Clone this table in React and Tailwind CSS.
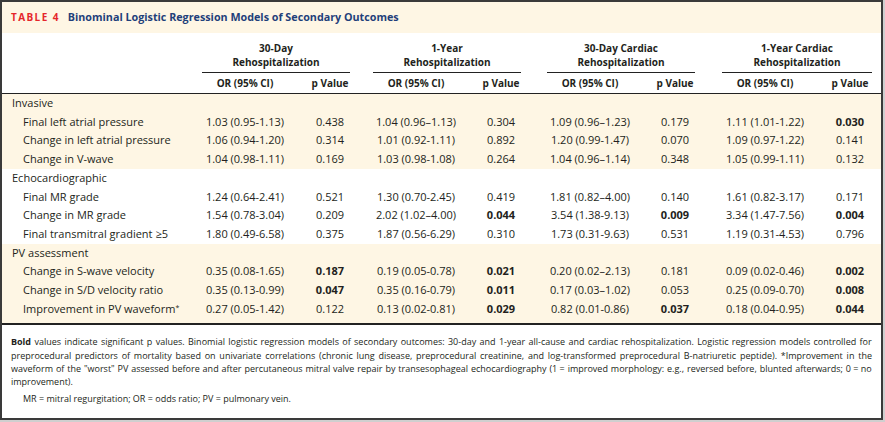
import React from "react";

const rows = [
  {
    section: "Invasive",
    bg: "bg-[#fef6e4]",
    items: [
      ["Final left atrial pressure", [["1.03 (0.95-1.13)", "0.438"], ["1.04 (0.96\u20131.13)", "0.304"], ["1.09 (0.96\u20131.23)", "0.179"], ["1.11 (1.01-1.22)", "0.030", true]]],
      ["Change in left atrial pressure", [["1.06 (0.94-1.20)", "0.314"], ["1.01 (0.92-1.11)", "0.892"], ["1.20 (0.99-1.47)", "0.070"], ["1.09 (0.97-1.22)", "0.141"]]],
      ["Change in V-wave", [["1.04 (0.98-1.11)", "0.169"], ["1.03 (0.98-1.08)", "0.264"], ["1.04 (0.96\u20131.14)", "0.348"], ["1.05 (0.99-1.11)", "0.132"]]],
    ],
  },
  {
    section: "Echocardiographic",
    bg: "bg-white",
    items: [
      ["Final MR grade", [["1.24 (0.64-2.41)", "0.521"], ["1.30 (0.70-2.45)", "0.419"], ["1.81 (0.82\u20134.00)", "0.140"], ["1.61 (0.82-3.17)", "0.171"]]],
      ["Change in MR grade", [["1.54 (0.78-3.04)", "0.209"], ["2.02 (1.02\u20134.00)", "0.044", true], ["3.54 (1.38-9.13)", "0.009", true], ["3.34 (1.47-7.56)", "0.004", true]]],
      ["Final transmitral gradient \u22655", [["1.80 (0.49-6.58)", "0.375"], ["1.87 (0.56-6.29)", "0.310"], ["1.73 (0.31-9.63)", "0.531"], ["1.19 (0.31-4.53)", "0.796"]]],
    ],
  },
  {
    section: "PV assessment",
    bg: "bg-[#fef6e4]",
    items: [
      ["Change in S-wave velocity", [["0.35 (0.08-1.65)", "0.187", true], ["0.19 (0.05-0.78)", "0.021", true], ["0.20 (0.02\u20132.13)", "0.181"], ["0.09 (0.02-0.46)", "0.002", true]]],
      ["Change in S/D velocity ratio", [["0.35 (0.13-0.99)", "0.047", true], ["0.35 (0.16-0.79)", "0.011", true], ["0.17 (0.03\u20131.02)", "0.053"], ["0.25 (0.09-0.70)", "0.008", true]]],
      ["Improvement in PV waveform*", [["0.27 (0.05-1.42)", "0.122"], ["0.13 (0.02-0.81)", "0.029", true], ["0.82 (0.01-0.86)", "0.037", true], ["0.18 (0.04-0.95)", "0.044", true]]],
    ],
  },
];

const groups = [
  { ml: "ml-0", w: "w-[148px]", l1: "30-Day", l2: "Rehospitalization" },
  { ml: "ml-[23px]", w: "w-[148px]", l1: "1-Year", l2: "Rehospitalization" },
  { ml: "ml-[26px]", w: "w-[148px]", l1: "30-Day Cardiac", l2: "Rehospitalization" },
  { ml: "ml-[27px]", w: "w-[150px]", l1: "1-Year Cardiac", l2: "Rehospitalization" },
];

const footLines = [
  "values indicate significant p values. Binomial logistic regression models of secondary outcomes: 30-day and 1-year all-cause and cardiac rehospitalization. Logistic regression models controlled for",
  "preprocedural predictors of mortality based on univariate correlations (chronic lung disease, preprocedural creatinine, and log-transformed preprocedural B-natriuretic peptide). *Improvement in the",
  "waveform of the \"worst\" PV assessed before and after percutaneous mitral valve repair by transesophageal echocardiography (1\u00a0= improved morphology: e.g., reversed before, blunted afterwards; 0\u00a0=\u00a0no",
];

function Label({ text }) {
  if (text.endsWith("*")) {
    return (
      <span>
        {text.slice(0, -1)}
        <span className="relative top-[-3px] text-[7px]">*</span>
      </span>
    );
  }
  return <span>{text}</span>;
}

function JustLine({ text, boldFirst }) {
  const words = text.split(" ");
  return (
    <div className="flex justify-between whitespace-nowrap">
      {boldFirst && <b className="shrink-0">Bold</b>}
      {words.map((w, i) => (
        <span key={i} className="shrink-0">{w}</span>
      ))}
    </div>
  );
}

export default function App() {
  return (
    <div className="w-[885px] h-[422px] bg-[#cfcfcf] font-['Open_Sans',sans-serif]">
      <div className="w-[883px] h-[420px] border-2 border-[#3a3a3a] bg-white flex flex-col text-[#231f20] overflow-hidden">
        {/* Title band */}
        <div className="h-[31px] bg-[#fef6e4] flex items-center pl-[9px] shrink-0">
          <span className="text-[#e5252b] font-bold text-[10px] tracking-[1.4px] mr-[8px]">TABLE 4</span>
          <span className="text-[#1f3f7a] font-bold text-[10.75px]">Binominal Logistic Regression Models of Secondary Outcomes</span>
        </div>
        {/* Header */}
        <div className="h-[61px] flex shrink-0 border-b-[1.5px] border-[#222]">
          <div className="w-[200px] shrink-0" />
          {groups.map((g, i) => (
            <div key={i} className={`${g.ml} ${g.w} shrink-0 flex flex-col`}>
              <div className="h-[40px] flex flex-col items-center justify-end pb-[3px] font-bold text-[10px] leading-[14px] border-b-[1.5px] border-[#222]">
                <span>{g.l1}</span>
                <span>{g.l2}</span>
              </div>
              <div className="flex-1 flex items-center font-bold text-[10px]">
                <div className="w-[86px] text-center">OR (95% CI)</div>
                <div className="w-[22px]" />
                <div className="w-[40px] text-center">p Value</div>
              </div>
            </div>
          ))}
        </div>
        {/* Body */}
        {rows.map((sec, si) => (
          <div key={si} className={`${sec.bg} shrink-0 ${si === 2 ? "pb-[5px] border-b-2 border-[#222]" : ""}`}>
            <div className="h-[18.7px] flex items-center pl-[10px] text-[11px]">{sec.section}</div>
            {sec.items.map(([label, vals], ri) => (
              <div key={ri} className="h-[18.7px] flex items-center text-[11px]">
                <div className="w-[200px] pl-[21px] shrink-0 whitespace-nowrap">
                  <Label text={label} />
                </div>
                {vals.map(([or, p, bold], gi) => (
                  <div key={gi} className={`${groups[gi].ml} ${groups[gi].w} shrink-0 flex`}>
                    <div className="w-[86px] text-center whitespace-nowrap">{or}</div>
                    <div className="w-[22px]" />
                    <div className={`w-[40px] text-center ${bold ? "font-bold" : ""}`}>{p}</div>
                  </div>
                ))}
              </div>
            ))}
          </div>
        ))}
        {/* Footnote */}
        <div className="flex-1 px-[9px] pt-[10px] text-[9px] leading-[13.3px]">
          <JustLine text={footLines[0]} boldFirst />
          <JustLine text={footLines[1]} />
          <JustLine text={footLines[2]} />
          <div>improvement).</div>
          <div className="pl-[12px] mt-[4px]">MR = mitral regurgitation; OR = odds ratio; PV = pulmonary vein.</div>
        </div>
      </div>
    </div>
  );
}
